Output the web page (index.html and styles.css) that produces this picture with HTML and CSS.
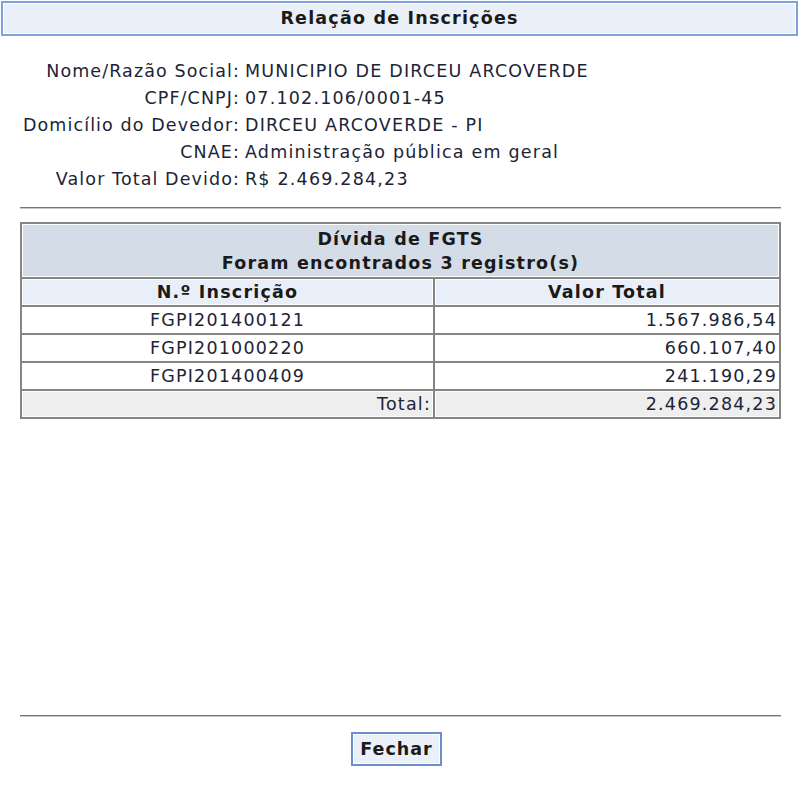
FILE: index.html
```html
<!DOCTYPE html>
<html lang="pt-BR">

<head>
	<meta charset="UTF-8">
	<meta name="viewport" content="width=device-width, initial-scale=1.0">

	<title>Relação de Inscrições</title>

	<link rel="stylesheet" href="styles.css">
</head>

<body>
	<div class="page">
		<h1 class="title">Relação de Inscrições</h1>

		<div class="info">
			<span class="label">Nome/Razão Social:</span>
			<span class="value">MUNICIPIO DE DIRCEU ARCOVERDE</span>
			<span class="label">CPF/CNPJ:</span>
			<span class="value">07.102.106/0001-45</span>
			<span class="label">Domicílio do Devedor:</span>
			<span class="value">DIRCEU ARCOVERDE - PI</span>
			<span class="label">CNAE:</span>
			<span class="value">Administração pública em geral</span>
			<span class="label">Valor Total Devido:</span>
			<span class="value">R$ 2.469.284,23</span>
		</div>

		<hr class="rule">

		<table class="list">
			<thead>
				<tr class="caption">
					<th colspan="2">Dívida de FGTS<br>Foram encontrados 3 registro(s)</th>
				</tr>
				<tr class="heads">
					<th>N.º Inscrição</th>
					<th>Valor Total</th>
				</tr>
			</thead>
			<tbody>
				<tr>
					<td class="code">FGPI201400121</td>
					<td class="num">1.567.986,54</td>
				</tr>
				<tr>
					<td class="code">FGPI201000220</td>
					<td class="num">660.107,40</td>
				</tr>
				<tr>
					<td class="code">FGPI201400409</td>
					<td class="num">241.190,29</td>
				</tr>
				<tr class="total">
					<td class="num">Total:</td>
					<td class="num">2.469.284,23</td>
				</tr>
			</tbody>
		</table>

		<div class="spacer"></div>

		<hr class="rule">

		<div class="actions">
			<button type="button" class="btn">Fechar</button>
		</div>
	</div>
</body>

</html>
```

FILE: styles.css
```css
*,
*:before,
*:after {
	box-sizing: border-box;
}

html {
	font-family: "DejaVu Sans", Verdana, sans-serif;
}

body {
	font-size: 17.5px;
	letter-spacing: 1.2px;
	margin: 0;
	padding: 0;

	background-color: #fff;
	color: #1c2436;
}

.page {
	height: 100vh;
	display: flex;
	flex-direction: column;
}

.title {
	margin: 1px 2px 0 1px;
	height: 35px;
	border: 2px solid #7ea3da;
	box-shadow: inset 0 0 0 1px #fff;
	background-color: #ebf0f8;

	font-size: 17.5px;
	font-weight: bold;
	line-height: 31px;
	text-align: center;
	color: #1a1a1a;
}

.info {
	display: grid;
	grid-template-columns: 240px 1fr;
	column-gap: 5px;
	margin-top: 22px;
	line-height: 27px;
}

.info .label {
	text-align: right;
	letter-spacing: 1.1px;
}

.rule {
	margin: 14px 19px 0 20px;
	border: 0;
	border-top: 1px solid #777;
	border-bottom: 1px solid #c8c8c8;
	height: 0;
}

.list {
	margin: 13px 19px 0 20px;
	border-collapse: collapse;
	border: 2px solid #858585;
}

.list th,
.list td {
	border: 2px solid #858585;
	padding: 0 2px;
	height: 28px;
}

.list th {
	font-weight: bold;
	color: #1a1a1a;
	box-shadow: inset 0 0 0 1px #fff;
}

.list .caption th {
	background-color: #d4dde7;
	line-height: 24px;
	height: 55px;
}

.list .heads th {
	background-color: #e9eff8;
}

.list .heads th:first-child {
	width: 413px;
}

.list td.code {
	text-align: center;
}

.list td.num {
	text-align: right;
}

.list .total td {
	background-color: #eee;
	box-shadow: inset 0 0 0 1px #fff;
}

.spacer {
	flex: 1 1 auto;
}

.actions {
	display: flex;
	justify-content: center;
	padding: 15px 7px 34px 0;
}

.btn {
	font: inherit;
	font-weight: bold;
	letter-spacing: 1px;
	color: #1a1a1a;
	width: 91px;
	height: 34px;
	padding: 0;
	border: 2px solid #6a8fcc;
	box-shadow: inset 0 0 0 1px #fff;
	background-color: #ebf0f8;
}
```
